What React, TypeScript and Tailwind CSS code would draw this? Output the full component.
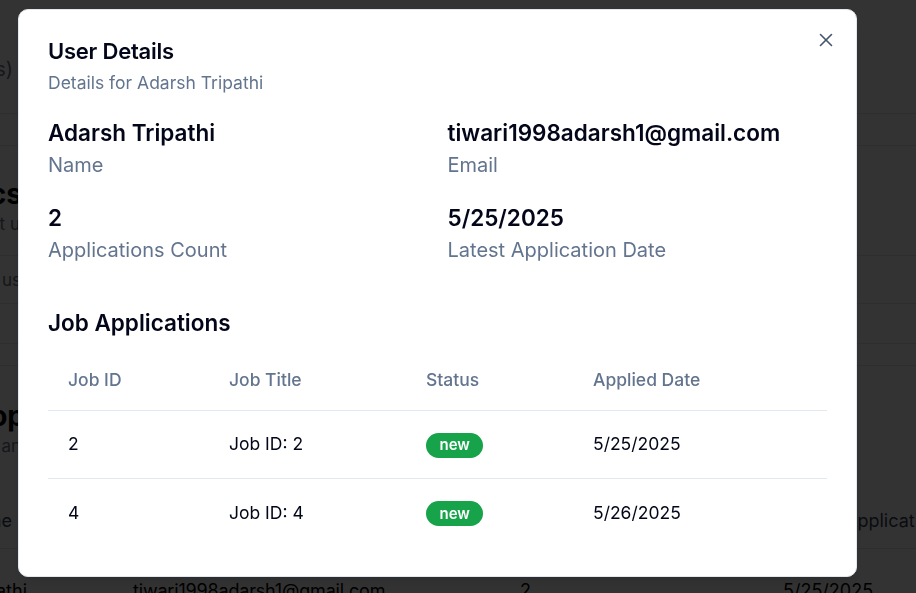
import React from "react";

function Frag({ w, children, className }: { w: string; children: React.ReactNode; className: string }) {
  return (
    <div className={`flex justify-end ${w}`}>
      <span className={`whitespace-nowrap ${className}`}>{children}</span>
    </div>
  );
}

function Field({ value, label }: { value: string; label: string }) {
  return (
    <div>
      <div className="text-[22.5px] leading-[34px] font-semibold text-slate-950">{value}</div>
      <div className="text-[20px] leading-[30px] text-slate-500">{label}</div>
    </div>
  );
}

const rows = [
  { id: "2", title: "Job ID: 2", status: "new", date: "5/25/2025" },
  { id: "4", title: "Job ID: 4", status: "new", date: "5/26/2025" },
];

export default function App() {
  return (
    <div className="relative h-[593px] w-[916px] overflow-hidden bg-white font-['Inter',sans-serif] text-black">
      {/* background page */}
      <div className="flex flex-col">
        <div className="flex h-[114px] items-start border-b border-gray-200 pt-[55px]">
          <Frag w="w-[13px]" className="text-[20px] leading-[28px] text-gray-500">(5 users)</Frag>
        </div>
        <div className="h-[32px] border-b border-gray-200" />
        <div className="flex h-[110px] flex-col border-b border-gray-200 pt-[30px]">
          <Frag w="w-[22px]" className="text-[28px] leading-[36px] font-bold">Analytics</Frag>
          <Frag w="w-[20px]" className="text-[17px] leading-[24px] text-gray-500">Insights about u</Frag>
        </div>
        <div className="flex h-[48px] items-center border-b border-gray-200">
          <Frag w="w-[21px]" className="text-[17px] leading-[24px] text-gray-500">Filter by us</Frag>
        </div>
        <div className="h-[40px] border-b border-gray-200" />
        <div className="h-[22px] border-b border-gray-200" />
        <div className="flex h-[183px] flex-col border-b border-gray-200 pt-[32px]">
          <Frag w="w-[25px]" className="text-[28px] leading-[36px] font-bold">Top</Frag>
          <Frag w="w-[21px]" className="text-[17px] leading-[24px] text-gray-500">Users an</Frag>
          <div className="mt-[49px] flex items-center">
            <Frag w="w-[12px]" className="text-[18px] leading-[28px] text-gray-700">Name</Frag>
            <span className="absolute whitespace-nowrap pl-[845px] text-[18px] leading-[28px] text-gray-700">Applications</span>
          </div>
        </div>
        <div className="flex h-[60px] items-start pt-[28px] text-[18px] leading-[28px]">
          <Frag w="w-[27px]" className="">Adarsh Tripathi</Frag>
          <span className="ml-[106px] w-[387px] whitespace-nowrap tracking-[-0.01em]">tiwari1998adarsh1@gmail.com</span>
          <span className="w-[263px]">2</span>
          <span className="whitespace-nowrap">5/25/2025</span>
        </div>
      </div>

      {/* overlay */}
      <div className="fixed inset-0 bg-black/80" />

      {/* dialog */}
      <div className="fixed left-[18px] top-[9px] h-[568px] w-[839px] rounded-[10px] border border-slate-200 bg-white px-[29px] pt-[24px] shadow-lg">
        <button className="absolute right-[23px] top-[23px] flex h-[14px] w-[14px] items-center justify-center text-slate-600">
          <svg width="14" height="14" viewBox="0 0 14 14" fill="none" stroke="currentColor" strokeWidth="1.6" strokeLinecap="round">
            <path d="M1.5 1.5 12.5 12.5" />
            <path d="M12.5 1.5 1.5 12.5" />
          </svg>
        </button>
        <h2 className="text-[22px] leading-[35px] font-semibold tracking-[-0.01em] text-slate-950">User Details</h2>
        <p className="mt-[1px] text-[17.5px] leading-[25px] text-slate-500">Details for Adarsh Tripathi</p>

        <div className="mt-[21px] grid grid-cols-2 gap-x-[20px] gap-y-[21px]">
          <Field value="Adarsh Tripathi" label="Name" />
          <Field value="tiwari1998adarsh1@gmail.com" label="Email" />
          <Field value="2" label="Applications Count" />
          <Field value="5/25/2025" label="Latest Application Date" />
        </div>

        <h3 className="mt-[40px] text-[22.5px] leading-[35px] font-semibold text-slate-950">Job Applications</h3>

        <div className="mt-[11px] text-[17.5px]">
          <div className="grid h-[60px] grid-cols-[161px_197px_167px_1fr] items-center border-b border-slate-200 font-medium text-slate-500">
            <div className="pl-[20px]">Job ID</div>
            <div className="pl-[20px]">Job Title</div>
            <div className="pl-[20px]">Status</div>
            <div className="pl-[20px]">Applied Date</div>
          </div>
          {rows.map((r, i) => (
            <div
              key={r.id}
              className={`grid h-[68px] grid-cols-[161px_197px_167px_1fr] items-center text-slate-950 ${i === 0 ? "border-b border-slate-200" : ""}`}
            >
              <div className="pl-[20px]">{r.id}</div>
              <div className="pl-[20px]">{r.title}</div>
              <div className="pl-[20px]">
                <span className="inline-flex h-[25px] items-center rounded-full bg-[#16a34a] px-[13.5px] text-[15px] font-semibold text-white">
                  {r.status}
                </span>
              </div>
              <div className="pl-[20px]">{r.date}</div>
            </div>
          ))}
        </div>
      </div>
    </div>
  );
}
